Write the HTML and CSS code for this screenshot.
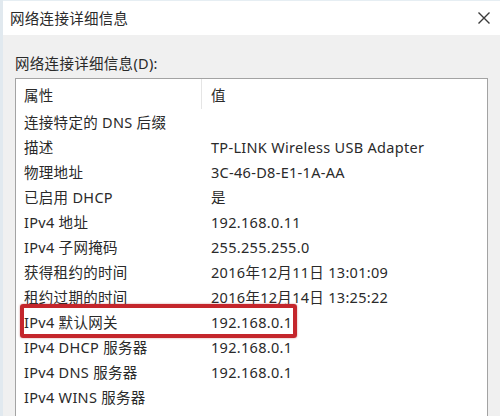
FILE: index.html
```html
<!DOCTYPE html>
<html lang="zh-CN">
<head>
<meta charset="utf-8">
<title>网络连接详细信息</title>
<link rel="stylesheet" href="styles.css">
</head>
<body>
<div class="window">
  <div class="titlebar">
    <span class="title">网络连接详细信息</span>
    <svg class="close" width="14" height="14" viewBox="0 0 14 14"><path d="M1.5 1.5L12.5 12.5M12.5 1.5L1.5 12.5" stroke="#3a3a3a" stroke-width="1.4" fill="none"/></svg>
  </div>
  <div class="content">
    <div class="label">网络连接详细信息(D):</div>
    <div class="listbox">
      <div class="row header"><div class="c1">属性</div><div class="c2">值</div></div>
      <div class="row"><div class="c1">连接特定的 DNS 后缀</div><div class="c2"></div></div>
      <div class="row"><div class="c1">描述</div><div class="c2">TP-LINK Wireless USB Adapter</div></div>
      <div class="row"><div class="c1">物理地址</div><div class="c2">3C-46-D8-E1-1A-AA</div></div>
      <div class="row"><div class="c1">已启用 DHCP</div><div class="c2">是</div></div>
      <div class="row"><div class="c1">IPv4 地址</div><div class="c2">192.168.0.11</div></div>
      <div class="row"><div class="c1">IPv4 子网掩码</div><div class="c2">255.255.255.0</div></div>
      <div class="row"><div class="c1">获得租约的时间</div><div class="c2">2016年12月11日 13:01:09</div></div>
      <div class="row"><div class="c1">租约过期的时间</div><div class="c2">2016年12月14日 13:25:22</div></div>
      <div class="row marked"><div class="c1">IPv4 默认网关</div><div class="c2">192.168.0.1</div><div class="highlight"></div></div>
      <div class="row"><div class="c1">IPv4 DHCP 服务器</div><div class="c2">192.168.0.1</div></div>
      <div class="row"><div class="c1">IPv4 DNS 服务器</div><div class="c2">192.168.0.1</div></div>
      <div class="row"><div class="c1">IPv4 WINS 服务器</div><div class="c2"></div></div>
    </div>
  </div>
</div>
</body>
</html>
```
FILE: styles.css
```css
html, body {
  margin: 0;
  padding: 0;
}
body {
  width: 500px;
  height: 416px;
  overflow: hidden;
  font-family: "Noto Sans", "Noto Sans CJK SC", sans-serif;
  font-size: 14.5px;
  letter-spacing: 0.3px;
  color: #2a2a2a;
  background: #f0f0f0;
}
.window {
  height: 416px;
  border-left: 3px solid #e1e9ef;
  background: #f0f0f0;
  box-sizing: border-box;
  display: flex;
  flex-direction: column;
}
.titlebar {
  height: 35px;
  flex: none;
  background: #ffffff;
  display: flex;
  align-items: center;
  justify-content: space-between;
  padding: 0 9px 0 7px;
  box-shadow: inset 0 1px 0 #e6eef3;
}
.title {
  line-height: 20px;
}
.close {
  display: block;
}
.content {
  flex: 1;
  min-height: 0;
  display: flex;
  flex-direction: column;
  padding: 18px 12px 0 12px;
}
.label {
  line-height: 20px;
}
.listbox {
  flex: 1;
  min-height: 0;
  overflow: hidden;
  margin-top: 5px;
  border: 1px solid #a3a3a3;
  border-bottom: none;
  background: #ffffff;
}
.row {
  display: grid;
  grid-template-columns: 186px 1fr;
  height: 25px;
  align-items: center;
  position: relative;
  white-space: nowrap;
}
.row .c1 {
  padding-left: 8px;
}
.row .c2 {
  padding-left: 9px;
}
.row.header {
  height: 30px;
  align-items: stretch;
}
.row.header .c1,
.row.header .c2 {
  display: flex;
  align-items: center;
}
.row.header .c1 {
  border-right: 1px solid #e5e5e5;
}
.highlight {
  position: absolute;
  left: 4px;
  top: -5px;
  width: 277px;
  height: 34px;
  box-sizing: border-box;
  border: 4px solid #c4262c;
  border-radius: 3px;
  box-shadow: 0 0 2px rgba(160, 20, 20, 0.5);
}
```
